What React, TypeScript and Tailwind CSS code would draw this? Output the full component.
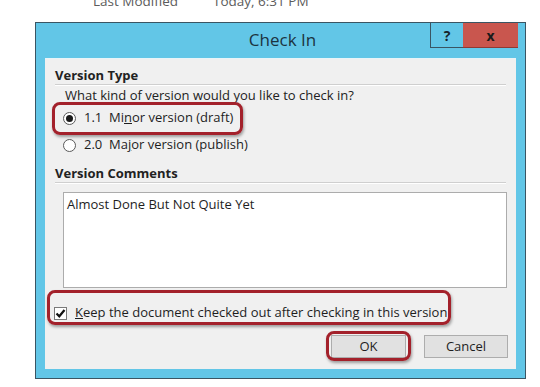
import React from "react";

const Radio = ({ checked }: { checked?: boolean }) => (
    <span className="w-[13px] h-[13px] rounded-full border border-[#5a5a5a] bg-white flex items-center justify-center shrink-0">
        {checked && <span className="w-[7px] h-[7px] rounded-full bg-[#1a1a1a]"></span>}
    </span>
);

const Highlight = ({ className }: { className: string }) => (
    <span
        className={`absolute rounded-[8px] border-[3px] border-[#a3212b] shadow-[1px_2px_3px_rgba(0,0,0,0.35)] pointer-events-none ${className}`}
    ></span>
);

const CheckInDialog: React.FC = () => {
    return (
        <div className="w-[540px] h-[387px] bg-white overflow-hidden text-[13px] text-[#1e1e1e] font-['Open_Sans',sans-serif]">
            {/* row above the dialog, cut off at top */}
            <div className="h-[13px] flex items-start text-[#5c5c5c] text-[13.5px] leading-[16px] overflow-hidden">
                <span className="ml-[93px] w-[120px] shrink-0 -mt-[7px]">Last Modified</span>
                <span className="-mt-[7px]">Today, 6:31 PM</span>
            </div>

            {/* Dialog */}
            <div className="mt-[9px] ml-[35px] w-[491px] h-[357px] border border-[#3a5563] bg-[#62c6e7] flex flex-col">
                {/* Title bar */}
                <div className="h-[35px] relative flex items-center justify-center shrink-0">
                    <span className="text-[17px] text-[#1c3340] ml-[4px] -mt-[2px]">Check In</span>
                    <div className="absolute top-0 right-[7px] flex h-[25px]">
                        <div className="w-[33px] border-l border-b border-[#3a5563] flex items-center justify-center font-bold text-[14px] text-[#16222b]">
                            ?
                        </div>
                        <div className="w-[55px] bg-[#c9564e] border-b border-[#8e3a35] flex items-center justify-center font-bold text-[14px] text-[#1a1a1a]">
                            x
                        </div>
                    </div>
                </div>

                {/* Content panel */}
                <div className="mx-[9px] mb-[9px] flex-1 bg-[#f0f0f0] border-t border-[#e8f4f8] flex flex-col">
                    <div className="px-[10px] pt-[7px]">
                        <div className="font-bold leading-[18px] text-[#222]">Version Type</div>
                        <div className="h-[2px] border-t border-[#cfcfcf] border-b-white border-b"></div>

                        <div className="pl-[10px] leading-[18px] text-[#222]">
                            What kind of version would you like to check in?
                        </div>

                        <div className="relative pl-[8px] mt-[3px] h-[22px] flex items-center gap-[8px] w-fit pr-[10px]">
                            <Highlight className="-left-[3px] -top-[5px] right-0 -bottom-[6px]" />
                            <Radio checked />
                            <span>
                                1.1&nbsp;&nbsp;Mi<span className="underline">n</span>or version (draft)
                            </span>
                        </div>

                        <div className="pl-[8px] mt-[5px] h-[22px] flex items-center gap-[8px]">
                            <Radio />
                            <span>
                                2.0&nbsp;&nbsp;Ma<span className="underline">j</span>or version (publish)
                            </span>
                        </div>

                        <div className="font-bold leading-[18px] mt-[8px] text-[#222]">Version Comments</div>
                        <div className="h-[2px] border-t border-[#cfcfcf] border-b-white border-b"></div>

                        <div className="ml-[8px] mr-[-1px] mt-[8px] h-[96px] bg-white border border-[#acacac] px-[3px] py-[2px] leading-[18px]">
                            Almost Done But Not Quite Yet
                        </div>

                        <div className="relative -ml-[1px] mt-[16px] h-[18px] flex items-center gap-[8px] w-fit">
                            <Highlight className="-left-[7px] -top-[14px] -right-[4px] -bottom-[3px]" />
                            <span className="w-[13px] h-[13px] border border-[#7a7a7a] bg-white flex items-center justify-center shrink-0">
                                <svg width="11" height="11" viewBox="0 0 11 11">
                                    <path d="M1.5 5.5 L4.3 8.3 L9.5 2" fill="none" stroke="#111" strokeWidth="2.2" />
                                </svg>
                            </span>
                            <span>
                                <span className="underline">K</span>eep the document checked out after checking in this version
                            </span>
                        </div>

                        <div className="flex justify-end gap-[18px] mt-[13px] mr-[-2px]">
                            <div className="relative">
                                <Highlight className="-left-[5px] -top-[4px] -right-[5px] -bottom-[3px]" />
                                <button className="w-[75px] h-[23px] bg-[#e1e1e1] border border-[#adadad] text-[13px] leading-none">
                                    OK
                                </button>
                            </div>
                            <button className="w-[84px] h-[23px] bg-[#e1e1e1] border border-[#adadad] text-[13px] leading-none">
                                Cancel
                            </button>
                        </div>
                    </div>
                </div>
            </div>
        </div>
    );
};

export default CheckInDialog;
